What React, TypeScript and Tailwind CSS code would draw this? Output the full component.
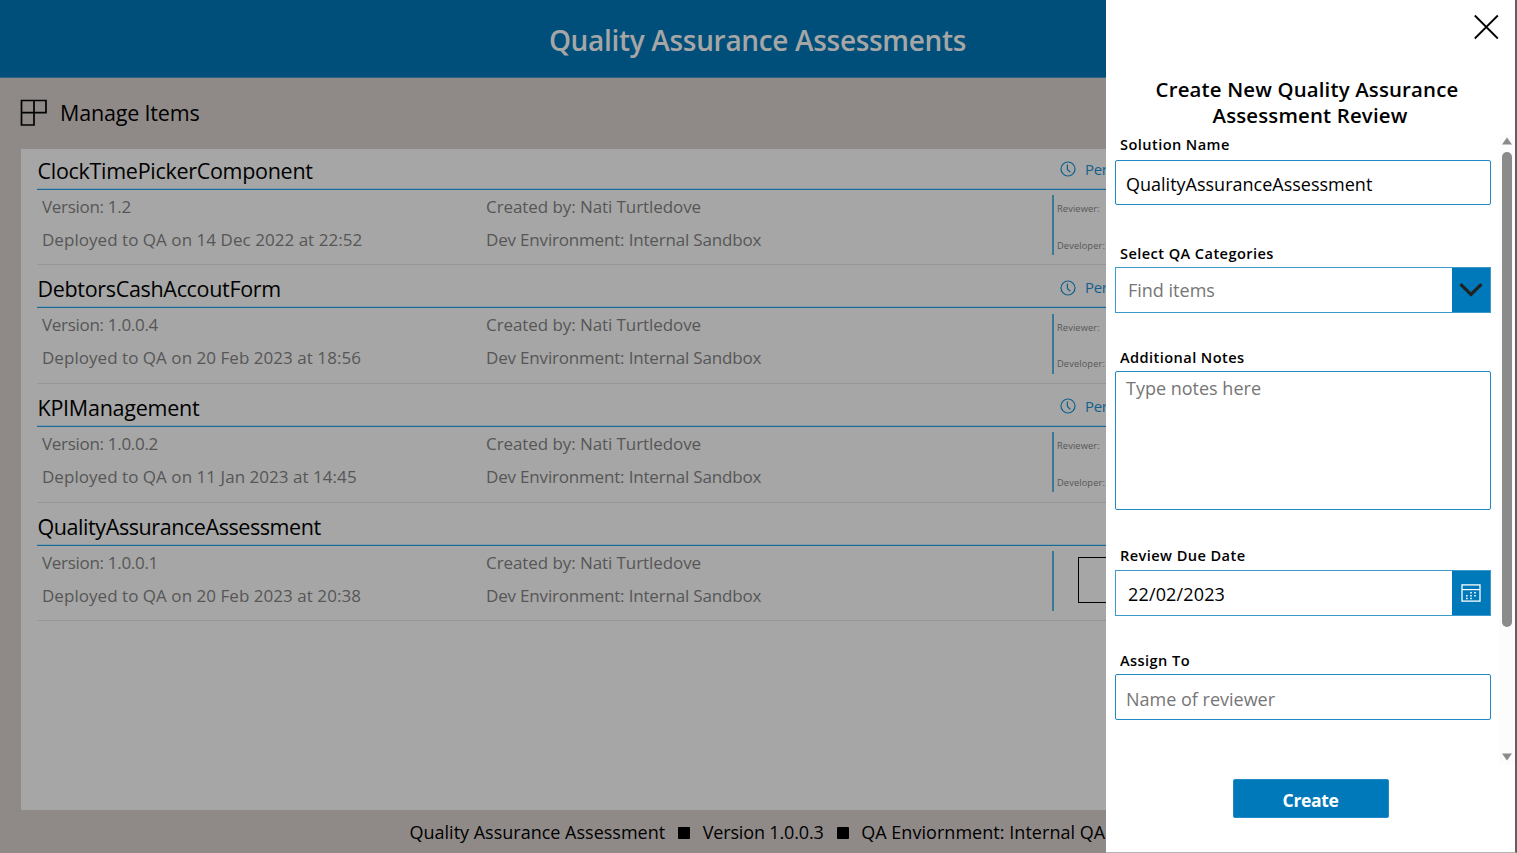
import type { ReactNode } from "react";

type Item = {
  name: string;
  nameClass: string;
  version: string;
  deployed: string;
  status?: string;
};

const items: Item[] = [
  { name: "ClockTimePickerComponent", nameClass: "pt-1 tracking-[-0.29px]", version: "1.2", deployed: "14 Dec 2022 at 22:52", status: "Per" },
  { name: "DebtorsCashAccoutForm", nameClass: "pt-[3px] tracking-[-0.32px]", version: "1.0.0.4", deployed: "20 Feb 2023 at 18:56", status: "Per" },
  { name: "KPIManagement", nameClass: "pt-[3px] tracking-[-0.25px]", version: "1.0.0.2", deployed: "11 Jan 2023 at 14:45", status: "Per" },
  { name: "QualityAssuranceAssessment", nameClass: "pt-1 tracking-[-0.42px]", version: "1.0.0.1", deployed: "20 Feb 2023 at 20:38" },
];

function ClockIcon() {
  return (
    <svg className="h-4 w-4 shrink-0 text-[#12608c]" viewBox="0 0 16 16" fill="none" stroke="currentColor" strokeWidth="1.2">
      <circle cx="8" cy="8" r="7" />
      <path d="M7.4 3.5V8.4L10.3 11.2" />
    </svg>
  );
}

function ItemRow({ item }: { item: Item }) {
  return (
    <div className="mb-[3px] flex h-[115.7px] flex-col">
      <div className="flex h-10 shrink-0 items-center border-b border-[#1f6a94] shadow-[inset_0_-1px_0_#7f9cab]">
        <div className={`w-[1023px] shrink-0 pl-[0.5px] text-[21.5px] leading-[30px] text-black ${item.nameClass}`}>{item.name}</div>
        {item.status && (
          <div className="flex shrink-0 items-center gap-[9px] text-[15px] tracking-[-0.3px] text-[#12608c]">
            <ClockIcon />
            <span>{item.status}</span>
          </div>
        )}
      </div>
      <div className="flex flex-1 border-b border-[#969696] text-[17px] text-[#565656]">
        <div className="flex w-[444px] shrink-0 flex-col gap-[9px] pt-[5.3px] pl-[5px] leading-6">
          <div className="tracking-[-0.3px]">Version: {item.version}</div>
          <div className="tracking-[0.04px]">Deployed to QA on {item.deployed}</div>
        </div>
        <div className="flex w-[571px] shrink-0 flex-col gap-[9px] pt-[5.3px] pl-[5px] leading-6">
          <div className="tracking-[-0.08px]">Created by: Nati Turtledove</div>
          <div className="tracking-[-0.18px]">Dev Environment: Internal Sandbox</div>
        </div>
        <div className="mt-[5.5px] flex h-[60px] flex-1 border-l-2 border-[#3d7899]">
          {item.status ? (
            <div className="flex flex-col justify-between pt-[8px] pb-[3.5px] pl-[3px] text-[9.3px] leading-3 tracking-[0.1px]">
              <span>Reviewer:</span>
              <span>Developer:</span>
            </div>
          ) : (
            <div className="mt-[6px] ml-[24px] h-[46px] w-[150px] shrink-0 border border-black" />
          )}
        </div>
      </div>
    </div>
  );
}

function Label({ children }: { children: ReactNode }) {
  return <div className="h-5 pl-[5px] text-[14.6px] leading-[19.5px] font-semibold tracking-[0.42px] text-black">{children}</div>;
}

function ChevronIcon() {
  return (
    <svg className="h-4 w-6" viewBox="0 0 24 16" fill="none" stroke="#222" strokeWidth="3.2">
      <path d="M1.5 2.2L12 12.5L22.5 2.2" />
    </svg>
  );
}

function CalendarIcon() {
  return (
    <svg className="-mt-px h-[18px] w-5" viewBox="0 0 20 18" fill="none" stroke="#fff">
      <rect x="1" y="0.9" width="18" height="16.2" strokeWidth="1.3" />
      <path d="M1 5.6H19" strokeWidth="1.2" />
      <path d="M9.2 8.8h2M13.2 8.8h2M5 11.7h2M9.2 11.7h2M13.2 11.7h2M5 14.5h2M9.2 14.5h2" strokeWidth="1.4" strokeDasharray="1.6 0.4" />
    </svg>
  );
}

export default function App() {
  return (
    <div className="relative h-[853px] w-[1517px] overflow-hidden bg-[#8f8a88] font-['Open_Sans','Noto_Sans',sans-serif] whitespace-nowrap">
      <div className="flex h-full w-[1106px] flex-col overflow-hidden">
        <header className="flex h-[78px] w-[1515px] shrink-0 items-center justify-center border-b border-[#2a6386] bg-[#004f7a] pt-[3px] text-[28px] font-semibold tracking-[-0.32px] text-[#a6a6a6]">
          <span>Quality Assurance Assessments</span>
        </header>
        <div className="flex h-[71px] shrink-0 items-center gap-[13px] pl-[20px] text-[21.5px] tracking-[-0.18px] text-black">
          <svg className="-mt-[3px] h-[27px] w-[27px]" viewBox="0 0 27 27" fill="none" stroke="#000" strokeWidth="1.7">
            <path d="M1.5 1.5H26V13.7H1.5ZM1.5 1.5V26H14V1.5" />
          </svg>
          <span>Manage Items</span>
        </div>
        <main className="ml-[21px] h-[661px] shrink-0 overflow-hidden bg-[#a6a6a6] pt-[0.5px] pl-4">
          {items.map((item) => (
            <ItemRow key={item.name} item={item} />
          ))}
        </main>
        <footer className="flex flex-1 items-center pt-[2px] pl-[409.5px] text-[18px] text-black">
          <span>Quality Assurance Assessment</span>
          <span className="mr-[12.5px] ml-[13px] h-3 w-3 shrink-0 rounded-[1px] bg-black" />
          <span className="tracking-[-0.15px]">Version 1.0.0.3</span>
          <span className="mr-[12.5px] ml-[13px] h-3 w-3 shrink-0 rounded-[1px] bg-black" />
          <span className="tracking-[0.04px]">QA Enviornment: Internal QA</span>
        </footer>
      </div>
      <aside className="absolute top-0 left-[1106px] flex h-[853px] w-[411px] flex-col border-r-2 border-b border-r-[#606060] border-b-[#b4b4b4] bg-white">
        <div className="flex h-[77px] shrink-0 justify-end pt-[14px] pr-4">
          <svg className="h-[26px] w-[26px]" viewBox="0 0 26 26" stroke="#000" strokeWidth="1.8">
            <path d="M1.8 1.5L24.8 24.5M24.8 1.5L1.8 24.5" />
          </svg>
        </div>
        <h2 className="-mt-px h-[59px] shrink-0 pr-[7px] text-center text-[20.4px] leading-[26px] font-semibold tracking-[0.16px] text-black">
          <span className="block">Create New Quality Assurance</span>
          <span className="block pl-[6px]">Assessment Review</span>
        </h2>
        <div className="flex h-[630px] shrink-0">
          <div className="flex w-[393px] flex-col pl-[9px] text-[18px]">
            <Label>Solution Name</Label>
            <div className="mt-[5px] flex h-[45px] w-[376px] items-center rounded-[2px] border border-[#2288c3] pt-[3px] pl-[10px] text-black">QualityAssuranceAssessment</div>
            <div className="mt-[39px]">
              <Label>Select QA Categories</Label>
            </div>
            <div className="mt-[3px] flex h-[46px] w-[376px] border border-[#3d98cc]">
              <div className="flex flex-1 items-center pl-[12px] text-[#767676]">Find items</div>
              <div className="flex w-[38px] items-center justify-center bg-[#0079bb]">
                <ChevronIcon />
              </div>
            </div>
            <div className="mt-[35px]">
              <Label>Additional Notes</Label>
            </div>
            <div className="mt-[3px] h-[139px] w-[376px] rounded-[2px] border border-[#2288c3] pt-[3px] pl-[10px] leading-[27px] text-[#767676]">Type notes here</div>
            <div className="mt-[36px]">
              <Label>Review Due Date</Label>
            </div>
            <div className="mt-[4px] flex h-[46px] w-[376px] border border-[#3d98cc]">
              <div className="flex flex-1 items-center pt-[2px] pl-[12px] tracking-[0.15px] text-black">22/02/2023</div>
              <div className="flex w-[38px] items-center justify-center bg-[#0079bb]">
                <CalendarIcon />
              </div>
            </div>
            <div className="mt-[35px]">
              <Label>Assign To</Label>
            </div>
            <div className="mt-[3px] flex h-[46px] w-[376px] items-center rounded-[2px] border border-[#2288c3] pt-[4px] pl-[10px] text-[#767676]">Name of reviewer</div>
          </div>
          <div className="flex w-4 flex-col items-center bg-[#fcfcfc] pt-[2px] pb-1">
            <svg className="h-2 w-[10px]" viewBox="0 0 10 8">
              <path d="M5 0.5L10 7.5H0Z" fill="#8b8b8b" />
            </svg>
            <div className="mt-[7px] h-[475px] w-[10px] rounded-full bg-[#8b8b8b]" />
            <svg className="mt-auto h-2 w-[10px]" viewBox="0 0 10 8">
              <path d="M5 7.5L10 0.5H0Z" fill="#8b8b8b" />
            </svg>
          </div>
        </div>
        <button className="mt-[14px] ml-[127px] flex h-[39px] w-[156px] shrink-0 items-center justify-center rounded-[2px] border border-[#2288c3] bg-[#0079bb] pt-[3px] pr-px text-[17.5px] font-bold tracking-[-0.35px] text-white">Create</button>
      </aside>
    </div>
  );
}
